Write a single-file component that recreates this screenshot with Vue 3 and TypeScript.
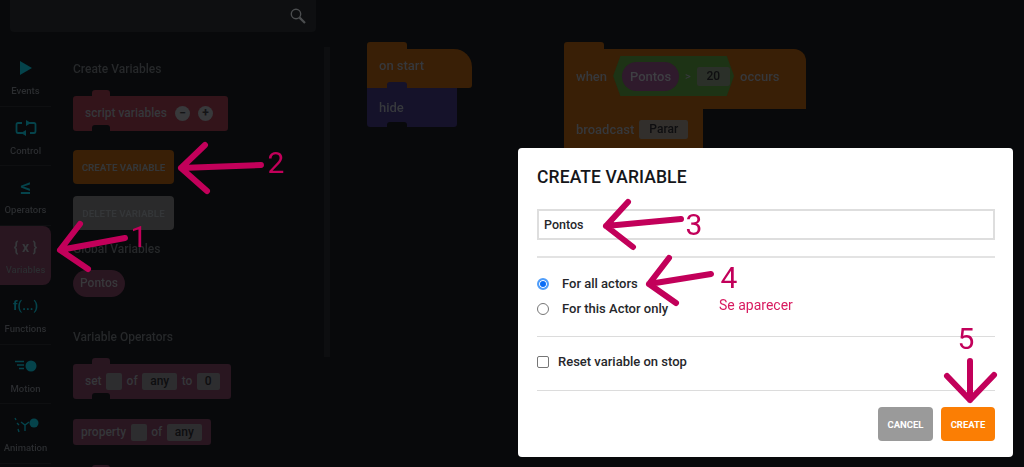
<script setup lang="ts">
interface Arrow { d: string }
const arrows: Arrow[] = [
  { d: 'M125 238 L60 250 M80 224 L60 250 L88 269' },
  { d: 'M261 165 L181 168 M205 145 L181 168 L207 191' },
  { d: 'M681 219 L606 226 M628 202 L606 226 L633 247' },
  { d: 'M711 274 L649 284 M669 258 L649 284 L676 303' },
  { d: 'M970 361 L970 400 M947 376 L970 400 L994 375' },
]
const numbers = [
  { t: '1', x: 139, y: 247 },
  { t: '2', x: 276, y: 173 },
  { t: '3', x: 694, y: 235 },
  { t: '4', x: 729, y: 288 },
  { t: '5', x: 966, y: 349 },
]
</script>

<template>
  <div class="page">
    <aside class="left">
      <div class="search">
        <svg width="16" height="16" viewBox="0 0 16 16" fill="none" stroke="#4b4d4f">
          <circle cx="6" cy="6" r="4.7" stroke-width="1.4" />
          <path d="M9.6 9.6 L15 15" stroke-width="2.2" />
        </svg>
      </div>
      <div class="panes">
        <nav class="cats">
          <div class="cat">
            <svg width="14" height="16" viewBox="0 0 14 16"><path d="M1 1 L13 8 L1 15Z" fill="#05434b" /></svg>
            <span>Events</span>
          </div>
          <div class="cat">
            <svg width="22" height="18" viewBox="0 0 22 18" fill="none" stroke="#05434b" stroke-width="1.8">
              <path d="M7 4 H3 Q1.5 4 1.5 5.5 V12 Q1.5 14 3 14 H9 M15 14 H19 Q20.5 14 20.5 12 V5.5 Q20.5 4 19 4 H12" />
              <path d="M11 1 L16 4 L11 7Z M11 11 L6 14 L11 17Z" fill="#05434b" stroke="none" />
            </svg>
            <span>Control</span>
          </div>
          <div class="cat">
            <b class="glyph teal big">≤</b>
            <span>Operators</span>
          </div>
          <div class="cat active">
            <b class="glyph gray">{ x }</b>
            <span>Variables</span>
          </div>
          <div class="cat">
            <b class="glyph teal fn">f(...)</b>
            <span>Functions</span>
          </div>
          <div class="cat">
            <svg width="24" height="14" viewBox="0 0 24 14">
              <circle cx="17" cy="7" r="5.5" fill="#05434b" />
              <path d="M1 2.5 H10 M3 6 H10 M5 9.5 H10" stroke="#05434b" stroke-width="1.6" />
            </svg>
            <span>Motion</span>
          </div>
          <div class="cat">
            <svg width="26" height="16" viewBox="0 0 26 16" fill="none" stroke="#05434b" stroke-width="1.4">
              <circle cx="21" cy="6" r="4.5" fill="#05434b" stroke="none" />
              <path d="M2 1 L3 3 M8 5 L12 8 L16 5 M12 8 V14 M4 6 L6 8 M5 12 L6 15" />
            </svg>
            <span>Animation</span>
          </div>
        </nav>
        <section class="flyout">
          <h4>Create Variables</h4>
          <div class="block red tall first-block">
            <span>script variables</span>
            <i class="round">−</i><i class="round">+</i>
          </div>
          <div class="fbtn orange">CREATE VARIABLE</div>
          <div class="fbtn grey">DELETE VARIABLE</div>
          <h4 class="global">Global Variables</h4>
          <div class="pill">Pontos</div>
          <h4 class="ops">Variable Operators</h4>
          <div class="block pink tall">
            <span>set</span><em class="field narrow"></em>
            <span>of</span><em class="field">any</em>
            <span>to</span><em class="field zero">0</em>
          </div>
          <div class="block pink flat">
            <span>property</span><em class="field narrow"></em>
            <span>of</span><em class="field">any</em>
          </div>
          <div class="stub"></div>
        </section>
        <div class="track"></div>
      </div>
    </aside>

    <div class="canvas-block start">
      <div class="hat short"><span>on start</span></div>
      <div class="stack purple"><span>hide</span></div>
    </div>

    <div class="canvas-block when">
      <div class="hat wide">
        <span>when</span>
        <div class="hex">
          <div class="hex-pill">Pontos</div>
          <span class="gt">&gt;</span>
          <em class="field num">20</em>
        </div>
        <span>occurs</span>
      </div>
      <div class="stack bcast">
        <span>broadcast</span><em class="field parar">Parar</em>
      </div>
    </div>

    <div class="modal">
      <h2>CREATE VARIABLE</h2>
      <div class="input">Pontos</div>
      <hr class="thick" />
      <div class="options">
        <label class="opt"><i class="radio on"></i>For all actors</label>
        <label class="opt"><i class="radio"></i>For this Actor only</label>
      </div>
      <hr />
      <label class="check"><i class="box"></i>Reset variable on stop</label>
      <hr />
      <div class="actions">
        <div class="btn cancel">CANCEL</div>
        <div class="btn create">CREATE</div>
      </div>
    </div>

    <svg class="notes" width="1024" height="467" viewBox="0 0 1024 467" fill="none">
      <path v-for="(a, i) in arrows" :key="i" :d="a.d" stroke="#c2005a" stroke-width="6" stroke-linecap="round" stroke-linejoin="round" />
      <text v-for="n in numbers" :key="n.t" :x="n.x" :y="n.y" text-anchor="middle" class="num-label">{{ n.t }}</text>
      <text x="719" y="310" class="note-label">Se aparecer</text>
    </svg>
  </div>
</template>

<style scoped>
.page {
  position: relative;
  width: 1024px;
  height: 467px;
  overflow: hidden;
  background: #08090b;
  font-family: Roboto, "Noto Sans", sans-serif;
  color: #2e3033;
}
.left, .canvas-block { filter: blur(0.4px); }
.left { width: 336px; height: 467px; display: flex; flex-direction: column; }
.search {
  width: 306px;
  height: 32px;
  margin-left: 10px;
  padding-right: 10px;
  box-sizing: border-box;
  background: #0e0f11;
  border-radius: 0 0 4px 4px;
  display: flex;
  align-items: center;
  justify-content: flex-end;
}
.panes { display: flex; flex: 1; margin-top: 15px; min-height: 0; }
.cats { width: 51px; flex: none; display: flex; flex-direction: column; }
.cat {
  height: 59.5px;
  flex: none;
  box-sizing: border-box;
  padding-top: 12px;
  display: flex;
  flex-direction: column;
  align-items: center;
  justify-content: flex-start;
  gap: 9px;
  font-size: 9.5px;
  font-weight: 500;
  color: #2b2d30;
  border-bottom: 1px solid #0e0f11;
}
.cat svg, .cat .glyph { height: 18px; line-height: 18px; }
.cat span { white-space: nowrap; line-height: 10px; }
.cat.active { background: #291620; border-radius: 0 8px 8px 0; border-bottom: 0; }
.glyph { font-size: 14px; font-weight: 700; }
.glyph.big { font-size: 22px; font-weight: 500; }
.glyph.fn { font-size: 13px; }
.teal { color: #05434b; }
.gray { color: #36383b; }
.flyout { width: 273px; margin-left: 22px; flex: none; font-weight: 500; }
h4 { margin: 15px 0 0; font-size: 12px; line-height: 14px; font-weight: 500; color: #26282a; }
.block {
  position: relative;
  display: flex;
  align-items: center;
  gap: 4.5px;
  box-sizing: border-box;
  margin-top: 20px;
  padding-left: 12px;
  border-radius: 3px;
  font-size: 12px;
  color: #35373a;
}
.block.tall::before, .block.tall::after {
  content: "";
  position: absolute;
  left: 19px;
  width: 18px;
  height: 6px;
  border-radius: 3px 3px 0 0;
}
.block.tall::before { top: -6px; background: inherit; }
.block.tall::after { bottom: 0; background: #08090b; }
.tall { height: 35px; padding-bottom: 1px; }
.first-block { width: 155px; margin-top: 20px; gap: 8px; }
.red { background: #33141a; }
.pink { background: #291620; }
.round {
  width: 15px;
  height: 15px;
  border-radius: 50%;
  background: #38393b;
  color: #141416;
  font: 700 12px/15px Roboto, sans-serif;
  text-align: center;
}
.fbtn {
  width: 101px;
  height: 34px;
  border-radius: 4px;
  display: flex;
  align-items: center;
  justify-content: center;
  font-size: 9.8px;
  font-weight: 700;
  color: #343638;
}
.orange { margin-top: 19px; background: #391f06; }
.grey { margin-top: 12px; background: #2a2a2b; }
.global { margin-top: 12px; }
.pill {
  width: 52px;
  height: 27px;
  margin-top: 14px;
  border-radius: 14px;
  background: #291620;
  font-size: 12px;
  line-height: 27px;
  text-align: center;
  color: #38383b;
}
.ops { margin-top: 33px; }
.ops + .block { width: 158px; margin-top: 20px; }
.flat { width: 138px; height: 26px; margin-top: 20px; padding-left: 8px; }
.field {
  min-width: 16px;
  height: 17px;
  padding: 0 8px;
  box-sizing: border-box;
  border-radius: 2px;
  background: #2d2d2f;
  color: #0e0e10;
  font-style: normal;
  font-size: 12px;
  line-height: 17px;
  text-align: center;
}
.field.narrow { width: 16px; padding: 0; }
.stub { width: 18px; height: 6px; margin: 20px 0 0 19px; border-radius: 3px 3px 0 0; background: #291620; }
.track { width: 6px; height: 310px; margin-left: -22px; background: #0d0e10; flex: none; }
.canvas-block { position: absolute; top: 49px; color: #36383c; font-size: 13px; font-weight: 500; }
.start { left: 367px; }
.when { left: 564px; }
.hat, .stack { position: relative; display: flex; align-items: center; box-sizing: border-box; padding-left: 12px; }
.hat { background: #391f06; }
.hat::before {
  content: "";
  position: absolute;
  left: 0;
  top: -7px;
  width: 40px;
  height: 7px;
  background: #391f06;
  border-radius: 3px 3px 0 0;
}
.short { width: 105px; height: 39px; padding-bottom: 7px; border-radius: 0 18px 3px 0; }
.wide { width: 242px; height: 60px; padding-bottom: 6px; gap: 6px; border-radius: 0 12px 0 0; }
.stack.purple { width: 90px; height: 39px; background: #15122a; border-radius: 0 0 3px 3px; }
.stack.purple::before {
  content: "";
  position: absolute;
  left: 20px;
  top: -6px;
  width: 20px;
  height: 6px;
  background: #15122a;
  border-radius: 3px 3px 0 0;
}
.stack.purple::after {
  content: "";
  position: absolute;
  left: 20px;
  bottom: 0;
  width: 20px;
  height: 5px;
  background: #08090b;
  border-radius: 3px 3px 0 0;
}
.hex {
  width: 121px;
  height: 40px;
  flex: none;
  display: flex;
  align-items: center;
  padding-left: 9px;
  box-sizing: border-box;
  background: #1d3315;
  clip-path: polygon(6% 0, 94% 0, 100% 50%, 94% 100%, 6% 100%, 0 50%);
}
.hex-pill {
  width: 57px;
  height: 29px;
  flex: none;
  border-radius: 15px;
  background: #2f1a2c;
  line-height: 29px;
  text-align: center;
  color: #3e3f43;
}
.gt { margin: 0 6px; font-size: 11px; }
.num { width: 33px; height: 19px; padding: 0; line-height: 19px; background: #2b3029; }
.stack.bcast { width: 139px; height: 50px; padding-bottom: 10px; gap: 5px; background: #391f06; }
.stack.bcast::after {
  content: "";
  position: absolute;
  left: 20px;
  bottom: 0;
  width: 20px;
  height: 6px;
  background: #15122a;
  border-radius: 3px 3px 0 0;
}
.parar { width: 49px; height: 19px; padding: 0; line-height: 19px; background: #322f2c; }
.modal {
  position: absolute;
  left: 518px;
  top: 148px;
  width: 495px;
  height: 309px;
  box-sizing: border-box;
  padding: 19px 18px 0 19px;
  background: #fff;
  border-radius: 4px;
  font-family: Roboto, "Noto Sans", sans-serif;
  color: #26272b;
}
h2 { margin: 0; font-size: 17.5px; line-height: 20px; font-weight: 500; color: #15161a; letter-spacing: 0.1px; }
.input {
  height: 31px;
  margin-top: 22px;
  padding-left: 5px;
  box-sizing: border-box;
  border: 2px solid #dedede;
  font-size: 12.5px;
  font-weight: 500;
  line-height: 27px;
}
hr { height: 1px; margin: 0; border: 0; background: #dcdcdc; }
hr.thick { height: 2px; margin-top: 16px; background: #e3e3e3; }
.options { display: flex; flex-direction: column; gap: 9px; margin: 18px 0 19px; }
.opt, .check { display: flex; align-items: center; font-size: 13px; font-weight: 500; line-height: 16px; }
.radio {
  width: 12px;
  height: 12px;
  margin-right: 13px;
  box-sizing: border-box;
  border: 1px solid #767676;
  border-radius: 50%;
}
.radio.on { border: 2px solid #4f9dfa; background: #0a6cf5; box-shadow: inset 0 0 0 1px #fff; }
.check { margin: 17px 0 20px; }
.box {
  width: 12px;
  height: 12px;
  margin-right: 9px;
  box-sizing: border-box;
  border: 1px solid #767676;
  border-radius: 2px;
}
.actions { display: flex; justify-content: flex-end; gap: 8px; margin-top: 16px; }
.btn {
  height: 34px;
  border-radius: 4px;
  display: flex;
  align-items: center;
  justify-content: center;
  font-size: 9.5px;
  font-weight: 700;
  color: #fff;
}
.cancel { width: 55px; background: #9a9a9a; }
.create { width: 54px; background: #fb7e04; }
.notes { position: absolute; left: 0; top: 0; pointer-events: none; }
.num-label { font: 400 30px Roboto, sans-serif; fill: #c2005a; }
.note-label { font: 400 14px Roboto, sans-serif; fill: #d81b60; }
</style>
